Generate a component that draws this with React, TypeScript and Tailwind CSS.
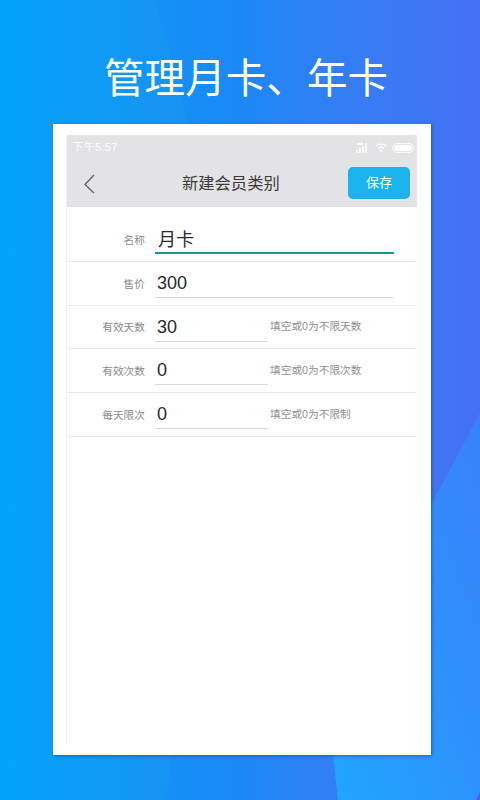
const font = "[font-family:'Liberation_Sans','Noto_Sans_CJK_SC',sans-serif]"

interface FieldRowProps {
  label: string
  value: string
  hint?: string
  active?: boolean
}

function FieldRow({ label, value, hint, active }: FieldRowProps) {
  return (
    <div className="mx-[1px] flex h-[43.75px] border-b-[1.5px] border-[#e6e8e8]">
      <div className="flex h-[42px] w-[77px] items-center justify-end pt-[2px] text-[10.7px] text-[#8a8a8a]">
        {label}
      </div>
      <div
        className={`ml-[10px] flex h-[36px] items-center pl-[2px] text-[18px] text-[#2a2a2a] ${
          hint ? "w-[113px]" : "w-[239px]"
        } ${active ? "border-b-2 border-[#169c8c] pt-[11px] pl-[3px] text-[17px]" : "border-b border-[#d8d9d9] pt-[8px]"}`}
      >
        {value}
      </div>
      {hint && (
        <div className="ml-[2px] flex h-[42px] items-center text-[10.7px] text-[#8f8f8f]">
          {hint}
        </div>
      )}
    </div>
  )
}

export default function App() {
  return (
    <div className={`relative h-[800px] w-[480px] overflow-hidden bg-gradient-to-r from-[#03a3f9] via-[#1a88f5] to-[#4570f3] ${font}`}>
      {/* Background shapes */}
      <svg className="absolute inset-0" width="480" height="800" viewBox="0 0 480 800">
        <defs>
          <linearGradient id="left" x1="0" y1="0" x2="1" y2="0">
            <stop offset="0" stopColor="#03a3f9" />
            <stop offset="1" stopColor="#1b90f2" />
          </linearGradient>
          <linearGradient id="right" x1="0" y1="1" x2="1" y2="0">
            <stop offset="0" stopColor="#1fa6ff" />
            <stop offset="1" stopColor="#3a80f8" />
          </linearGradient>
        </defs>
        <path d="M0 0H155C175 70 190 130 205 200C220 400 190 620 166 800H0Z" fill="url(#left)" />
        <path d="M338 800L333 755L431 505L480 413V800Z" fill="url(#right)" />
        <path d="M476 800L480 792V800Z" fill="#4a5ee8" />
      </svg>

      <div className="relative flex h-full flex-col">
        <h1 className="mt-[55px] h-[69px] pl-[104px] text-[40.6px] leading-[48px] font-normal whitespace-nowrap text-white">
          管理月卡、年卡
        </h1>

        {/* Phone card */}
        <div className="ml-[53px] h-[631px] w-[378px] bg-white pt-[11px] pl-[13px] shadow-[1px_1px_3px_rgba(20,60,140,0.55)]">
          <div className="h-[610px] w-[351px] border-l border-[#eaf4fd]">
            <div className="flex h-[72px] flex-col bg-[#e3e3e6]">
              <div className="flex h-[22px] items-center justify-between pt-[3px] pr-[3px] pl-[5px]">
                <span className="text-[11.5px] text-white/80">下午5:57</span>
                <div className="flex items-center">
                  <svg width="13" height="10" viewBox="0 0 13 10" fill="#ffffff" opacity="0.85">
                    <rect x="0" y="7" width="2" height="3" />
                    <rect x="3" y="5" width="2" height="5" />
                    <rect x="6" y="3" width="2" height="7" />
                    <rect x="9" y="0" width="2" height="10" />
                    <rect x="1" y="0" width="6" height="2" />
                  </svg>
                  <svg className="ml-[6px]" width="12" height="9" viewBox="0 0 12 9" fill="none" stroke="#ffffff" strokeWidth="1.2">
                    <path d="M1 3C4 .8 8 .8 11 3" />
                    <path d="M3 5.2C4.8 4 7.2 4 9 5.2" />
                    <circle cx="6" cy="7.6" r=".7" fill="#ffffff" />
                  </svg>
                  <div className="ml-[5px] flex h-[10px] w-[22px] items-center justify-center rounded-full border border-white/80">
                    <div className="h-[6px] w-[18px] rounded-full bg-white" />
                  </div>
                </div>
              </div>
              <div className="flex h-[50px] items-start">
                <svg className="mt-[17px] ml-[16px]" width="12" height="20" viewBox="0 0 12 20" fill="none" stroke="#666666" strokeWidth="1.4">
                  <path d="M11 1L2 10.5L11 19" />
                </svg>
                <div className="mt-[15px] ml-[87px] w-[99px] text-[16.3px] leading-[22px] whitespace-nowrap text-[#3a3a3a]">
                  新建会员类别
                </div>
                <button className="mt-[10px] ml-[67px] flex h-[32px] w-[62px] items-center justify-center rounded-[5px] bg-[#1ab3ee] text-[13px] text-white">
                  保存
                </button>
              </div>
            </div>

            <div className="pt-[11px]">
              <FieldRow label="名称" value="月卡" active />
              <FieldRow label="售价" value="300" />
              <FieldRow label="有效天数" value="30" hint="填空或0为不限天数" />
              <FieldRow label="有效次数" value="0" hint="填空或0为不限次数" />
              <FieldRow label="每天限次" value="0" hint="填空或0为不限制" />
            </div>
          </div>
        </div>
      </div>
    </div>
  )
}
